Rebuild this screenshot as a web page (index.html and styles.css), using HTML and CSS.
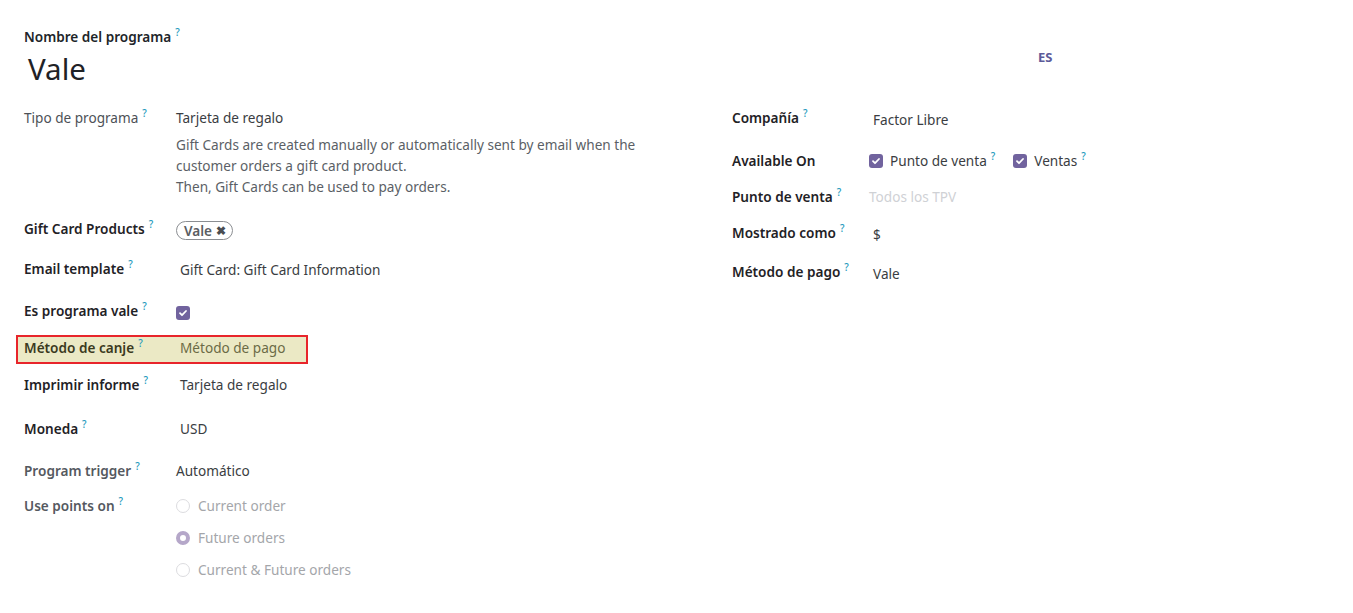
FILE: index.html
```html
<!DOCTYPE html>
<html lang="es">
<head>
<meta charset="utf-8">
<title>Vale</title>
<link rel="stylesheet" href="styles.css">
</head>
<body>
<div class="sheet">
  <div class="title-block">
    <div class="title-label">Nombre del programa<sup class="q">?</sup></div>
    <div class="title-row">
      <div class="title-name">Vale</div>
      <div class="lang">ES</div>
    </div>
  </div>

  <div class="groups">
    <div class="group left">
      <div class="row r-tipo">
        <div class="label light">Tipo de programa<sup class="q">?</sup></div>
        <div class="value">
          <div>Tarjeta de regalo</div>
          <div class="desc">Gift Cards are created manually or automatically sent by email when the<br>customer orders a gift card product.<br>Then, Gift Cards can be used to pay orders.</div>
        </div>
      </div>
      <div class="row r-gift">
        <div class="label">Gift Card Products<sup class="q">?</sup></div>
        <div class="value"><span class="tag">Vale <span class="tag-x">✖</span></span></div>
      </div>
      <div class="row r-email">
        <div class="label">Email template<sup class="q">?</sup></div>
        <div class="value shift">Gift Card: Gift Card Information</div>
      </div>
      <div class="row r-vale">
        <div class="label">Es programa vale<sup class="q">?</sup></div>
        <div class="value"><span class="check"><svg viewBox="0 0 14 14" width="14" height="14"><path d="M4 7.2l2 2 4-4.2" fill="none" stroke="#fff" stroke-width="1.8" stroke-linecap="round" stroke-linejoin="round"/></svg></span></div>
      </div>
      <div class="row r-canje highlight">
        <div class="label hl-label">Método de canje<sup class="q">?</sup></div>
        <div class="value shift hl-value">Método de pago</div>
      </div>
      <div class="row r-imprimir">
        <div class="label">Imprimir informe<sup class="q">?</sup></div>
        <div class="value shift">Tarjeta de regalo</div>
      </div>
      <div class="row r-moneda">
        <div class="label">Moneda<sup class="q">?</sup></div>
        <div class="value shift">USD</div>
      </div>
      <div class="row r-trigger">
        <div class="label grey">Program trigger<sup class="q">?</sup></div>
        <div class="value">Automático</div>
      </div>
      <div class="row r-points">
        <div class="label grey">Use points on<sup class="q">?</sup></div>
        <div class="value radios">
          <div class="radio-item"><span class="radio"></span>Current order</div>
          <div class="radio-item"><span class="radio on"></span>Future orders</div>
          <div class="radio-item"><span class="radio"></span>Current &amp; Future orders</div>
        </div>
      </div>
    </div>

    <div class="group right">
      <div class="row rr-company">
        <div class="label">Compañía<sup class="q">?</sup></div>
        <div class="value low">Factor Libre</div>
      </div>
      <div class="row rr-avail">
        <div class="label">Available On</div>
        <div class="value checks">
          <span class="check"><svg viewBox="0 0 14 14" width="14" height="14"><path d="M4 7.2l2 2 4-4.2" fill="none" stroke="#fff" stroke-width="1.8" stroke-linecap="round" stroke-linejoin="round"/></svg></span>
          <span class="check-label">Punto de venta<sup class="q">?</sup></span>
          <span class="check"><svg viewBox="0 0 14 14" width="14" height="14"><path d="M4 7.2l2 2 4-4.2" fill="none" stroke="#fff" stroke-width="1.8" stroke-linecap="round" stroke-linejoin="round"/></svg></span>
          <span class="check-label">Ventas<sup class="q">?</sup></span>
        </div>
      </div>
      <div class="row rr-pos">
        <div class="label">Punto de venta<sup class="q">?</sup></div>
        <div class="value placeholder">Todos los TPV</div>
      </div>
      <div class="row rr-shown">
        <div class="label">Mostrado como<sup class="q">?</sup></div>
        <div class="value low">$</div>
      </div>
      <div class="row rr-pay">
        <div class="label">Método de pago<sup class="q">?</sup></div>
        <div class="value low">Vale</div>
      </div>
    </div>
  </div>
</div>
</body>
</html>
```

FILE: styles.css
```css
* { box-sizing: border-box; }
html, body { margin: 0; padding: 0; background: #fff; }
body {
  font-family: "Noto Sans", "Open Sans", sans-serif;
  font-size: 13.6px;
  line-height: 21px;
  color: #3a3d42;
}
.sheet { padding: 26px 0 0 24px; }

.title-label { font-weight: 600; color: #212529; height: 21px; }
.title-row { display: grid; grid-template-columns: 1014px auto; align-items: center; height: 44px; }
.title-name { font-size: 29.5px; line-height: 44px; color: #1f2226; padding-left: 4px; }
.lang { font-size: 13px; font-weight: 700; color: #5d5a99; margin-top: -24px; }

.q { font-size: 10px; color: #1f9bbd; font-weight: 500; vertical-align: top; position: relative; top: 1px; margin-left: 4px; line-height: 10px; }

.groups { display: grid; grid-template-columns: 708px 1fr; margin-top: 16px; }
.row { display: grid; grid-template-columns: 152px 1fr; align-items: start; }
.right .row { grid-template-columns: 141px 1fr; }
.label { font-weight: 600; color: #1f2226; white-space: nowrap; }
.label.light { font-weight: 400; color: #4d5157; }
.label.grey { font-weight: 600; color: #55595f; }
.value { color: #3a3d42; }
.value.shift { padding-left: 4px; }
.value.low { padding-top: 2px; }
.desc { margin-top: 6px; color: #5b5f66; }

.r-tipo { height: 111px; }
.r-gift { height: 40px; }
.r-email { height: 42px; }
.r-email .value { padding-top: 1px; }
.r-vale { height: 37px; }
.r-canje { height: 37px; }
.r-imprimir { height: 44px; }
.r-moneda { height: 42px; }
.r-trigger { height: 35px; }

.tag {
  display: inline-flex; align-items: center; gap: 4px;
  height: 19px; margin-top: 3px; padding: 0 6px 0 7px;
  border: 1px solid #8b8e92; border-radius: 10px;
  font-weight: 600; color: #5a5e63; line-height: 17px;
}
.tag-x { font-size: 12px; color: #4a4d52; }

.check {
  display: inline-flex; width: 14px; height: 14px; border-radius: 3px;
  background: #71639e; vertical-align: middle;
}
.r-vale .check { margin-top: 2px; }

.highlight { margin-left: -8px; padding-left: 6px; width: 292px; border: 2px solid #e8252b; background: #ebe9c5; grid-template-columns: 152px 1fr; margin-top: -2px; margin-bottom: 10px; line-height: 21px; }
.r-canje.highlight { height: 29px; }
.hl-label { color: #3b3a1e; }
.hl-value { color: #6b6b46; }

.radios { display: flex; flex-direction: column; gap: 11px; color: #a4a6aa; }
.radio-item { display: flex; align-items: center; gap: 8px; height: 21px; }
.radio { width: 14px; height: 14px; border-radius: 50%; border: 1px solid #dcdcdf; background: #fff; }
.radio.on { border: 4px solid #b5a7c9; background: #fff; }

.rr-company { height: 43px; }
.rr-avail { height: 36px; }
.rr-pos { height: 36px; }
.rr-shown { height: 39px; }
.checks { display: flex; align-items: center; margin-left: -4px; }
.checks .check-label { margin-left: 7px; margin-right: 18px; }
.placeholder { color: #cfd1d5; margin-left: -4px; }
```
